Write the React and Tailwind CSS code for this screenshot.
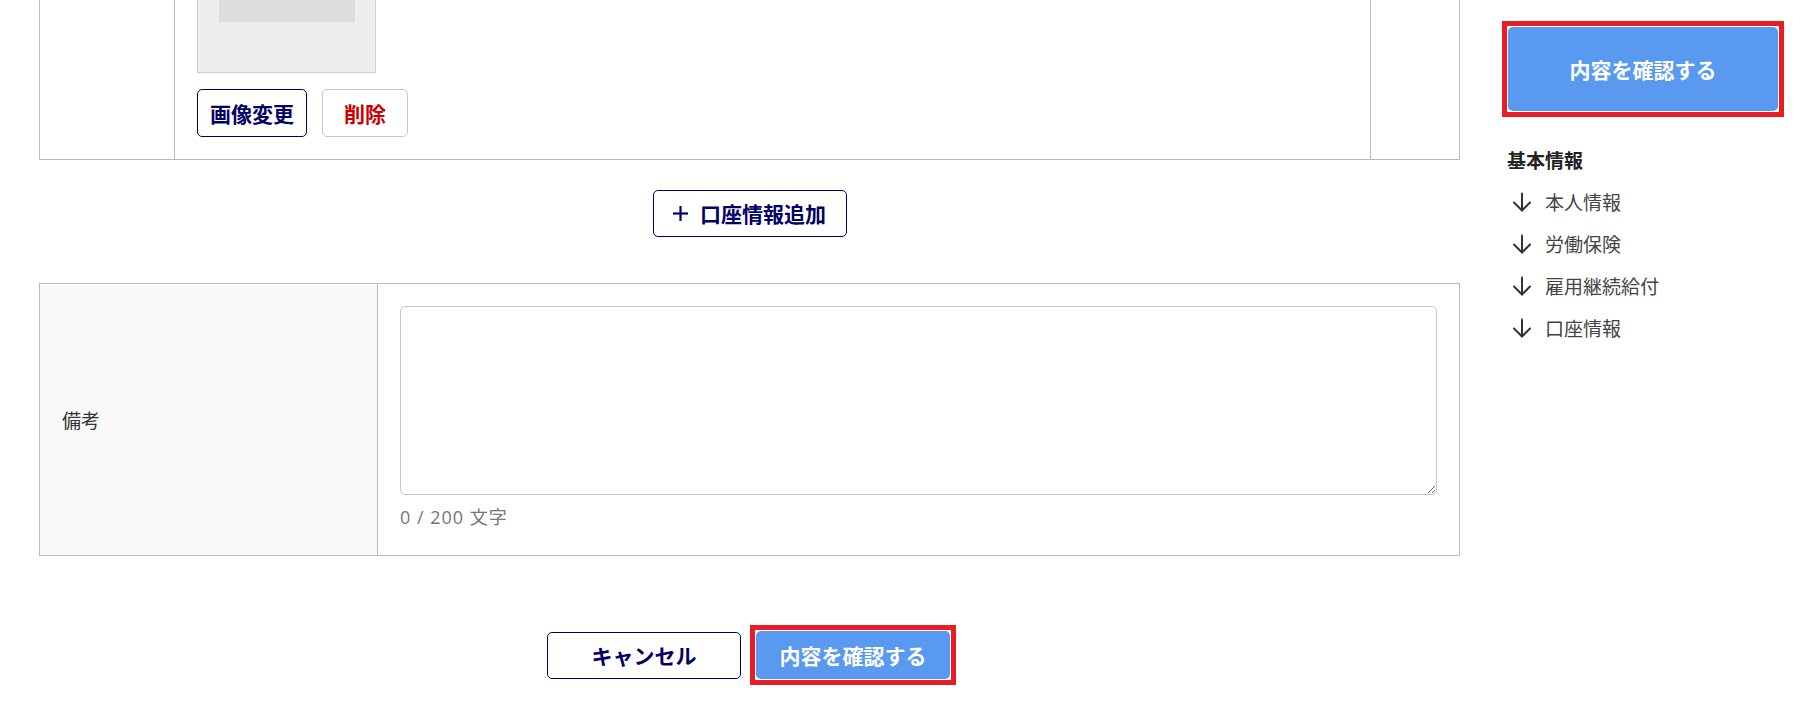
import { useState } from "react";

const navy = "text-[#000066]";

const ArrowDownIcon = () => (
  <svg width="20" height="20" viewBox="0 0 20 20" fill="none" stroke="#333" strokeWidth="2" strokeLinecap="round" strokeLinejoin="round">
    <path d="M10 1.5v17" />
    <path d="M2 10.5l8 8 8-8" />
  </svg>
);

const PlusIcon = () => (
  <svg width="15" height="15" viewBox="0 0 15 15" fill="none" stroke="#000066" strokeWidth="2.2">
    <path d="M7.5 0v15" />
    <path d="M0 7.5h15" />
  </svg>
);

// red highlight frame around the confirm buttons
const Highlight = ({ children, className = "" }) => (
  <div className={`border-[5px] border-[#ea1c24] p-px ${className}`}>{children}</div>
);

const navItems = ["本人情報", "労働保険", "雇用継続給付", "口座情報"];

const App = () => {
  const [memo, setMemo] = useState("");

  return (
    <div className="flex h-[720px] overflow-hidden bg-white pl-[39px] font-['Noto_Sans_CJK_JP','Noto_Sans',sans-serif] text-[#333]">
      {/* Main form column */}
      <main className="w-[1421px] shrink-0">
        {/* Bank account row (scrolled, top cut off) */}
        <div className="grid grid-cols-[134px_1fr_89px] border-x border-b border-[#bbbbbb]">
          <div />
          <div className="border-l border-[#bbbbbb] pl-[22px] pb-[22px]">
            <div className="w-[179px] h-[73px] bg-[#eeeeee] border-x border-b border-[#d0d0d0] pl-[21px]">
              <div className="w-[136px] h-[22px] bg-[#dddddd]" />
            </div>
            <div className="mt-4 flex gap-[15px]">
              <button className={`w-[110px] h-[48px] rounded-[5px] border border-[#000066] bg-white text-[21px] font-bold leading-none ${navy}`}>
                画像変更
              </button>
              <button className="w-[86px] h-[48px] rounded-[5px] border border-[#c8c8c8] bg-white text-[21px] font-bold leading-none text-[#cc0000]">
                削除
              </button>
            </div>
          </div>
          <div className="border-l border-[#bbbbbb]" />
        </div>

        {/* Add account */}
        <div className="mt-[30px] flex justify-center">
          <button className={`w-[194px] h-[47px] rounded-[5px] border border-[#000066] bg-white flex items-center justify-center gap-[12px] text-[21px] font-bold leading-none ${navy}`}>
            <PlusIcon />
            <span>口座情報追加</span>
          </button>
        </div>

        {/* Notes */}
        <div className="mt-[46px] grid grid-cols-[337px_1fr] border border-[#bbbbbb]">
          <div className="bg-[#f9f9f9] flex items-center pl-[22px] text-[19px] leading-[27px]">
            備考
          </div>
          <div className="border-l border-[#bbbbbb] px-[22px] pt-[22px] pb-[26px]">
            <textarea
              value={memo}
              onChange={(e) => setMemo(e.target.value.slice(0, 200))}
              className="block w-full h-[189px] rounded-[5px] border border-[#c8c8c8] bg-white outline-none resize-y p-3 text-[17px]"
            />
            <p className="mt-[10px] text-[18px] leading-[24px] tracking-[1px] text-[#777777] font-['Open_Sans','Noto_Sans_CJK_JP',sans-serif]">
              {memo.length} / 200 文字
            </p>
          </div>
        </div>

        {/* Actions */}
        <div className="mt-[69px] pl-[4px] flex items-center justify-center gap-[9px]">
          <button className={`w-[194px] h-[47px] rounded-[5px] border border-[#000066] bg-white text-[21px] font-bold leading-none ${navy}`}>
            キャンセル
          </button>
          <Highlight>
            <button className="block w-[194px] h-[48px] rounded-[5px] bg-[#5999ef] text-[21px] font-bold leading-none text-white">
              内容を確認する
            </button>
          </Highlight>
        </div>
      </main>

      {/* Sidebar */}
      <aside className="ml-[42px] w-[282px] shrink-0 pt-[21px]">
        <Highlight>
          <button className="block w-full h-[84px] rounded-[5px] bg-[#5999ef] text-[21px] font-bold leading-none text-white">
            内容を確認する
          </button>
        </Highlight>
        <div className="pl-[5px]">
          <h3 className="mt-[29px] text-[19px] font-bold leading-[27px] text-[#222]">基本情報</h3>
          <ul className="mt-[8px]">
            {navItems.map((item) => (
              <li key={item} className="h-[42px] flex items-center gap-[13px] pl-[5px] text-[19px] text-[#444]">
                <ArrowDownIcon />
                <span>{item}</span>
              </li>
            ))}
          </ul>
        </div>
      </aside>
    </div>
  );
};

export default App;
